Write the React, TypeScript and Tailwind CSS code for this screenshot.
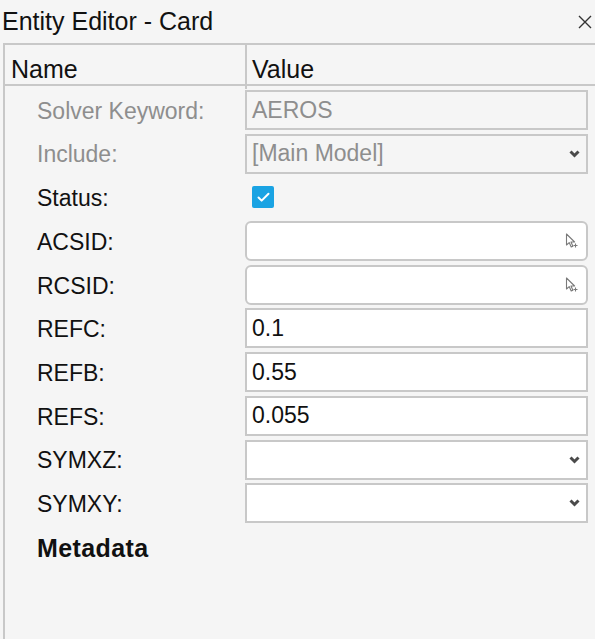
import { Check } from "lucide-react";

type Field =
  | { kind: "text"; value: string }
  | { kind: "select"; value: string }
  | { kind: "picker" }
  | { kind: "check" };

interface Row {
  label: string;
  field: Field;
  disabled?: boolean;
}

const rows: Row[] = [
  { label: "Solver Keyword:", field: { kind: "text", value: "AEROS" }, disabled: true },
  { label: "Include:", field: { kind: "select", value: "[Main Model]" }, disabled: true },
  { label: "Status:", field: { kind: "check" } },
  { label: "ACSID:", field: { kind: "picker" } },
  { label: "RCSID:", field: { kind: "picker" } },
  { label: "REFC:", field: { kind: "text", value: "0.1" } },
  { label: "REFB:", field: { kind: "text", value: "0.55" } },
  { label: "REFS:", field: { kind: "text", value: "0.055" } },
  { label: "SYMXZ:", field: { kind: "select", value: "" } },
  { label: "SYMXY:", field: { kind: "select", value: "" } },
];

// Small heavy chevron used by the combo boxes
function Chevron() {
  return (
    <svg width="11" height="8" viewBox="0 0 11 8" className="shrink-0">
      <path d="M1.5 1.5 L5.5 5.5 L9.5 1.5" fill="none" stroke="#4a4a4a" strokeWidth="3" />
    </svg>
  );
}

// Entity picker cursor glyph
function PickCursor() {
  return (
    <svg width="14" height="16" viewBox="0 0 14 16" className="shrink-0">
      <path
        d="M1.5 1 L1.5 12 L4.2 9.6 L6.2 14 L7.9 13.2 L6 9 L9.6 9 Z"
        fill="#fff"
        stroke="#7a7a7a"
        strokeWidth="1.1"
        strokeLinejoin="round"
      />
      <path d="M10.5 10.5 v4 M8.5 12.5 h4" stroke="#7a7a7a" strokeWidth="1.1" />
    </svg>
  );
}

function FieldBox({ field, disabled }: { field: Field; disabled?: boolean }) {
  const text = disabled ? "text-[#8e8e8e]" : "text-[#111]";
  const bg = disabled ? "bg-[#f5f5f5]" : "bg-white";

  if (field.kind === "check") {
    return (
      <div className="flex h-full items-center pl-[7px]">
        <div className="flex h-[22px] w-[22px] items-center justify-center rounded-[2px] bg-[#1aa3e3]">
          <Check size={15} strokeWidth={3.2} className="text-white" />
        </div>
      </div>
    );
  }

  if (field.kind === "picker") {
    return (
      <div className="flex h-full items-center justify-end rounded-[6px] border-2 border-[#c8c8c8] bg-white pr-[7px]">
        <PickCursor />
      </div>
    );
  }

  return (
    <div className={`flex h-full items-center justify-between border-2 border-[#c8c8c8] ${bg} pl-[5px] pr-[6px]`}>
      <span className={`${text} text-[23px] leading-none`}>{field.value}</span>
      {field.kind === "select" && <Chevron />}
    </div>
  );
}

export default function App() {
  return (
    <div
      className="flex h-[639px] w-[595px] flex-col overflow-hidden bg-[#f5f5f5] text-[#111]"
      style={{ fontFamily: '"Liberation Sans", Arial, sans-serif' }}
    >
      {/* Title bar */}
      <div className="flex h-[43px] shrink-0 items-center justify-between pl-[2px] pr-[3px]">
        <span className="text-[25px] leading-none">Entity Editor - Card</span>
        <svg width="14" height="14" viewBox="0 0 14 14">
          <path d="M1 1 L13 13 M13 1 L1 13" stroke="#333" strokeWidth="1.4" />
        </svg>
      </div>

      {/* Property table */}
      <div className="ml-[3px] flex flex-1 flex-col border-l-2 border-t-2 border-[#c8c8c8]">
        <div className="grid h-[41px] shrink-0 grid-cols-[240px_1fr] border-b-2 border-[#c8c8c8]">
          <div className="flex items-center pl-[6px] pt-[6px] text-[25px]">Name</div>
          <div className="flex items-center border-l-2 border-[#c8c8c8] pl-[5px] pt-[6px] text-[25px]">Value</div>
        </div>

        <div className="flex flex-col gap-[3.7px] pt-[4px] pr-[7px]">
          {rows.map((r) => (
            <div key={r.label} className="grid h-[40px] grid-cols-[240px_1fr]">
              <div
                className={`flex items-center pl-[32px] pt-[2px] text-[23px] ${r.disabled ? "text-[#8e8e8e]" : "text-[#111]"}`}
              >
                {r.label}
              </div>
              <FieldBox field={r.field} disabled={r.disabled} />
            </div>
          ))}
          <div className="flex h-[40px] items-center pl-[32px] pt-[4px] text-[25px] font-bold tracking-[0.4px]">
            Metadata
          </div>
        </div>
      </div>
    </div>
  );
}
